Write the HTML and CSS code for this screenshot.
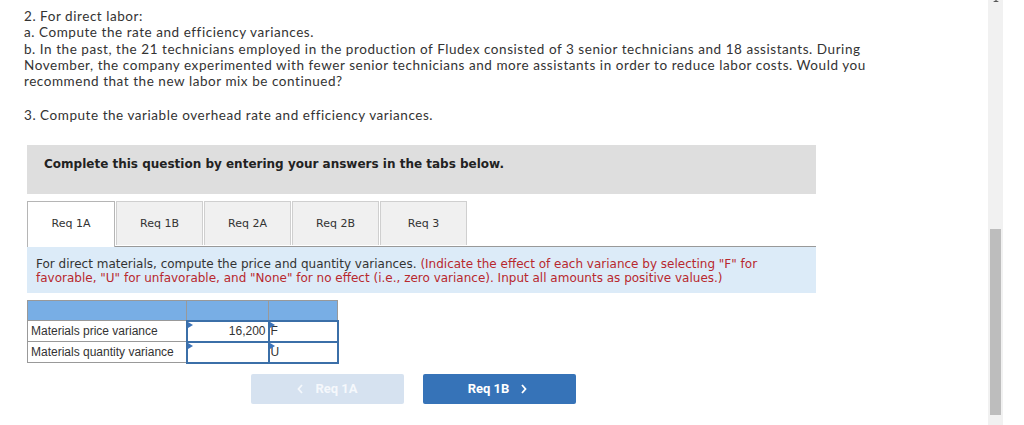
FILE: index.html
```html
<!DOCTYPE html>
<html>
<head>
<meta charset="utf-8">
<link rel="stylesheet" href="styles.css">
</head>
<body>
<div class="page">
  <div class="question">
    <p>2. For direct labor:<br>a. Compute the rate and efficiency variances.<br>b. In the past, the 21 technicians employed in the production of Fludex consisted of 3 senior technicians and 18 assistants. During November, the company experimented with fewer senior technicians and more assistants in order to reduce labor costs. Would you recommend that the new labor mix be continued?</p>
    <p>3. Compute the variable overhead rate and efficiency variances.</p>
  </div>

  <div class="panel">
    <div class="banner">Complete this question by entering your answers in the tabs below.</div>
    <div class="tabs">
      <div class="tab active">Req 1A</div>
      <div class="tab">Req 1B</div>
      <div class="tab">Req 2A</div>
      <div class="tab">Req 2B</div>
      <div class="tab">Req 3</div>
      <div class="tab-fill"></div>
    </div>
    <div class="instructions">For direct materials, compute the price and quantity variances. <span class="red">(Indicate the effect of each variance by selecting "F" for favorable, "U" for unfavorable, and "None" for no effect (i.e., zero variance). Input all amounts as positive values.)</span></div>

    <table class="grid">
      <colgroup><col class="c1"><col class="c2"><col class="c3"></colgroup>
      <tr class="head"><td></td><td></td><td></td></tr>
      <tr><td class="label">Materials price variance</td><td class="input num"><span class="flag"></span>16,200</td><td class="input sel"><span class="flag"></span>F</td></tr>
      <tr><td class="label">Materials quantity variance</td><td class="input num"><span class="flag"></span></td><td class="input sel"><span class="flag"></span>U</td></tr>
    </table>

    <div class="nav">
      <button class="btn prev"><svg class="chev" width="6" height="10" viewBox="0 0 6 10"><polyline points="5,1 1.5,5 5,9" fill="none" stroke="currentColor" stroke-width="1.8"/></svg>Req 1A</button>
      <button class="btn next">Req 1B<svg class="chev" width="6" height="10" viewBox="0 0 6 10"><polyline points="1,1 4.5,5 1,9" fill="none" stroke="currentColor" stroke-width="1.8"/></svg></button>
    </div>
  </div>
</div>
<div class="scrollbar"><div class="arrow"></div><div class="thumb"></div></div>
</body>
</html>
```
FILE: styles.css
```css
html, body { margin: 0; padding: 0; background: #fff; }
body { width: 1024px; height: 425px; overflow: hidden; position: relative; }
.page { padding: 8px 0 0 24px; width: 852px; }
.question { font-family: Lato, "Open Sans", sans-serif; font-size: 13.5px; letter-spacing: 0.55px; line-height: 16.3px; color: #333; }
.question p { margin: 0 0 18px 0; }
.panel { margin-left: 3px; margin-top: 21px; width: 789px; }
.banner { background: #dedede; height: 49px; box-sizing: border-box; padding: 12px 0 0 17px; font-family: Verdana, "DejaVu Sans", sans-serif; font-weight: bold; font-size: 12px; color: #222; }
.tabs { display: flex; margin-top: 7px; height: 45px; border-bottom: 1px solid #999; }
.tab { width: 87px; height: 44px; box-sizing: border-box; border: 1px solid #cfcfcf; border-bottom: none; background: #f0f0f0; margin-right: 1px; display: flex; align-items: center; justify-content: center; font-family: Verdana, "DejaVu Sans", sans-serif; font-size: 11px; color: #333; align-self: flex-start; }
.tab.active { background: #fff; border-color: #b5b5b5; width: 88px; height: 46px; padding-bottom: 2px; margin-bottom: -1px; }
.tab-fill { flex: 1; }
.instructions { background: #dcebf8; padding: 10px 8px 8px 9px; font-family: Verdana, "DejaVu Sans", sans-serif; font-size: 12px; line-height: 14px; color: #333; }
.red { color: #b8282e; }
.grid { border-collapse: collapse; table-layout: fixed; width: 310px; margin-top: 7px; font-family: Arial, "Liberation Sans", sans-serif; font-size: 12px; color: #333; }
.grid col.c1 { width: 159px; }
.grid col.c2 { width: 82px; }
.grid col.c3 { width: 69px; }
.grid td { border: 1px solid #999; height: 19px; padding: 0; position: relative; line-height: 14px; }
.grid .head td { background: #78aee5; }
.label { padding-left: 3px !important; }
.input { border: 2px solid #3b6fa8 !important; }
.num { text-align: right; padding-right: 2px !important; }
.sel { padding-left: 1px !important; }
.flag { position: absolute; left: 0; top: 0; width: 0; height: 0; border-top: 3px solid transparent; border-bottom: 3px solid transparent; border-left: 5px solid #3b73b9; }
.nav { display: flex; gap: 19px; margin-top: 10px; margin-left: 224px; }
.btn { width: 153px; height: 30px; border: none; border-radius: 2px; color: #fff; font-family: Roboto, "Liberation Sans", sans-serif; font-weight: bold; font-size: 13px; display: flex; align-items: center; justify-content: center; gap: 12px; padding: 0; }
.prev { background: #d6e2f0; color: #f5f8fc; }
.next { background: #3673b8; padding-right: 4px; }
.scrollbar { position: absolute; left: 988px; top: 0; width: 15px; height: 425px; background: #f1f1f1; }
.thumb { position: absolute; left: 2px; top: 229px; width: 11px; height: 186px; background: #bdbdbd; }
.arrow { position: absolute; left: 5px; top: 0; width: 0; height: 0; border-left: 3px solid transparent; border-right: 3px solid transparent; border-bottom: 2px solid #555; }
```
